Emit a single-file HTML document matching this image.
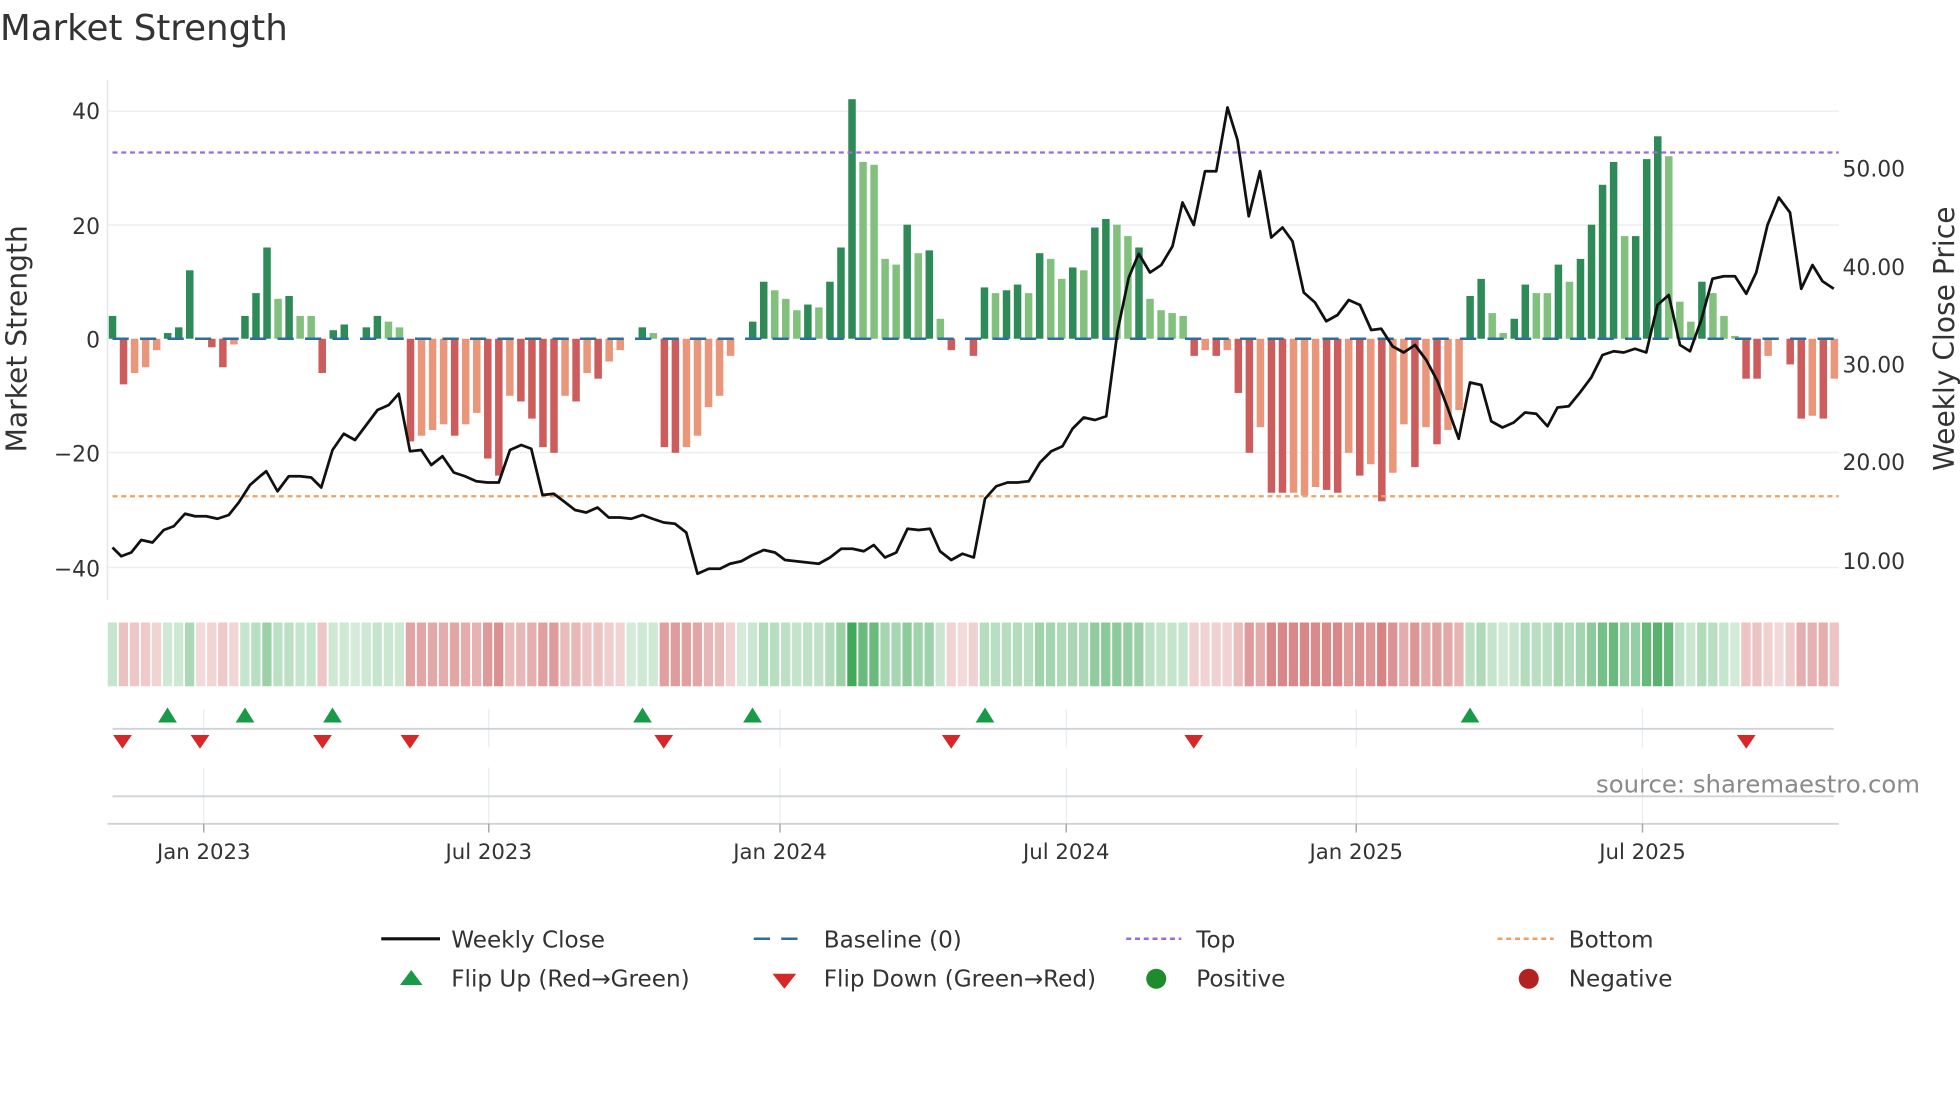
<!DOCTYPE html>
<html><head><meta charset="utf-8"><style>
html,body{margin:0;padding:0;background:#fff;}
svg{display:block;font-family:"DejaVu Sans","Liberation Sans",sans-serif;}
.D{fill:#2e8b57}.L{fill:#82c07e}.R{fill:#cd5c5c}.S{fill:#e9967a}
.g{fill:rgb(60,165,85)}.r{fill:rgb(200,85,85)}
</style></head><body>
<svg width="1960" height="1102" viewBox="0 0 1568 881.6" xmlns="http://www.w3.org/2000/svg">
<rect width="1568" height="882" fill="#fff"/>
<text x="0" y="32" font-size="28.5" fill="#333">Market Strength</text>
<g stroke="#eceff3" stroke-width="1.2">
<line x1="86" x2="1471" y1="89" y2="89"/><line x1="86" x2="1471" y1="180" y2="180"/>
<line x1="86" x2="1471" y1="362" y2="362"/><line x1="86" x2="1471" y1="454" y2="454"/>
</g>
<line x1="86" x2="86" y1="64" y2="480" stroke="#e3e6ea" stroke-width="1.2"/>
<g font-size="17.5" fill="#333" text-anchor="end">
<text x="80" y="95">40</text><text x="80" y="187">20</text><text x="80" y="278">0</text>
<text x="80" y="369">−20</text><text x="80" y="461">−40</text>
</g>
<g font-size="17.5" fill="#333">
<text x="1474" y="141">50.00</text><text x="1474" y="220">40.00</text><text x="1474" y="298">30.00</text>
<text x="1474" y="376">20.00</text><text x="1474" y="455">10.00</text>
</g>
<text transform="translate(21,271) rotate(-90)" font-size="22.5" fill="#333" text-anchor="middle">Market Strength</text>
<text transform="translate(1563,271) rotate(-90)" font-size="22.5" fill="#333" text-anchor="middle">Weekly Close Price</text>

<g transform="translate(87,271) scale(8.83,-4.5625)">
<rect class="D" x="0" y="0" width="0.68" height="4"/>
<rect class="R" x="1" y="-8" width="0.68" height="8"/>
<rect class="S" x="2" y="-6" width="0.68" height="6"/>
<rect class="S" x="3" y="-5" width="0.68" height="5"/>
<rect class="S" x="4" y="-2" width="0.68" height="2"/>
<rect class="D" x="5" y="0" width="0.68" height="1"/>
<rect class="D" x="6" y="0" width="0.68" height="2"/>
<rect class="D" x="7" y="0" width="0.68" height="12"/>
<rect class="R" x="9" y="-1.5" width="0.68" height="1.5"/>
<rect class="R" x="10" y="-5" width="0.68" height="5"/>
<rect class="S" x="11" y="-1" width="0.68" height="1"/>
<rect class="D" x="12" y="0" width="0.68" height="4"/>
<rect class="D" x="13" y="0" width="0.68" height="8"/>
<rect class="D" x="14" y="0" width="0.68" height="16"/>
<rect class="L" x="15" y="0" width="0.68" height="7"/>
<rect class="D" x="16" y="0" width="0.68" height="7.5"/>
<rect class="L" x="17" y="0" width="0.68" height="4"/>
<rect class="L" x="18" y="0" width="0.68" height="4"/>
<rect class="R" x="19" y="-6" width="0.68" height="6"/>
<rect class="D" x="20" y="0" width="0.68" height="1.5"/>
<rect class="D" x="21" y="0" width="0.68" height="2.5"/>
<rect class="D" x="23" y="0" width="0.68" height="2"/>
<rect class="D" x="24" y="0" width="0.68" height="4"/>
<rect class="L" x="25" y="0" width="0.68" height="3"/>
<rect class="L" x="26" y="0" width="0.68" height="2"/>
<rect class="R" x="27" y="-18" width="0.68" height="18"/>
<rect class="S" x="28" y="-17" width="0.68" height="17"/>
<rect class="S" x="29" y="-16" width="0.68" height="16"/>
<rect class="S" x="30" y="-15" width="0.68" height="15"/>
<rect class="R" x="31" y="-17" width="0.68" height="17"/>
<rect class="S" x="32" y="-15" width="0.68" height="15"/>
<rect class="S" x="33" y="-13" width="0.68" height="13"/>
<rect class="R" x="34" y="-21" width="0.68" height="21"/>
<rect class="R" x="35" y="-24" width="0.68" height="24"/>
<rect class="S" x="36" y="-10" width="0.68" height="10"/>
<rect class="R" x="37" y="-11" width="0.68" height="11"/>
<rect class="R" x="38" y="-14" width="0.68" height="14"/>
<rect class="R" x="39" y="-19" width="0.68" height="19"/>
<rect class="R" x="40" y="-20" width="0.68" height="20"/>
<rect class="S" x="41" y="-10" width="0.68" height="10"/>
<rect class="R" x="42" y="-11" width="0.68" height="11"/>
<rect class="S" x="43" y="-6" width="0.68" height="6"/>
<rect class="R" x="44" y="-7" width="0.68" height="7"/>
<rect class="S" x="45" y="-4" width="0.68" height="4"/>
<rect class="S" x="46" y="-2" width="0.68" height="2"/>
<rect class="D" x="48" y="0" width="0.68" height="2"/>
<rect class="L" x="49" y="0" width="0.68" height="1"/>
<rect class="R" x="50" y="-19" width="0.68" height="19"/>
<rect class="R" x="51" y="-20" width="0.68" height="20"/>
<rect class="S" x="52" y="-19" width="0.68" height="19"/>
<rect class="S" x="53" y="-17" width="0.68" height="17"/>
<rect class="S" x="54" y="-12" width="0.68" height="12"/>
<rect class="S" x="55" y="-10" width="0.68" height="10"/>
<rect class="S" x="56" y="-3" width="0.68" height="3"/>
<rect class="D" x="58" y="0" width="0.68" height="3"/>
<rect class="D" x="59" y="0" width="0.68" height="10"/>
<rect class="L" x="60" y="0" width="0.68" height="8.5"/>
<rect class="L" x="61" y="0" width="0.68" height="7"/>
<rect class="L" x="62" y="0" width="0.68" height="5"/>
<rect class="D" x="63" y="0" width="0.68" height="6"/>
<rect class="L" x="64" y="0" width="0.68" height="5.5"/>
<rect class="D" x="65" y="0" width="0.68" height="10"/>
<rect class="D" x="66" y="0" width="0.68" height="16"/>
<rect class="D" x="67" y="0" width="0.68" height="42"/>
<rect class="L" x="68" y="0" width="0.68" height="31"/>
<rect class="L" x="69" y="0" width="0.68" height="30.5"/>
<rect class="L" x="70" y="0" width="0.68" height="14"/>
<rect class="L" x="71" y="0" width="0.68" height="13"/>
<rect class="D" x="72" y="0" width="0.68" height="20"/>
<rect class="L" x="73" y="0" width="0.68" height="15"/>
<rect class="D" x="74" y="0" width="0.68" height="15.5"/>
<rect class="L" x="75" y="0" width="0.68" height="3.5"/>
<rect class="R" x="76" y="-2" width="0.68" height="2"/>
<rect class="R" x="78" y="-3" width="0.68" height="3"/>
<rect class="D" x="79" y="0" width="0.68" height="9"/>
<rect class="L" x="80" y="0" width="0.68" height="8"/>
<rect class="D" x="81" y="0" width="0.68" height="8.5"/>
<rect class="D" x="82" y="0" width="0.68" height="9.5"/>
<rect class="L" x="83" y="0" width="0.68" height="8"/>
<rect class="D" x="84" y="0" width="0.68" height="15"/>
<rect class="L" x="85" y="0" width="0.68" height="14"/>
<rect class="L" x="86" y="0" width="0.68" height="10.5"/>
<rect class="D" x="87" y="0" width="0.68" height="12.5"/>
<rect class="L" x="88" y="0" width="0.68" height="12"/>
<rect class="D" x="89" y="0" width="0.68" height="19.5"/>
<rect class="D" x="90" y="0" width="0.68" height="21"/>
<rect class="L" x="91" y="0" width="0.68" height="20"/>
<rect class="L" x="92" y="0" width="0.68" height="18"/>
<rect class="D" x="93" y="0" width="0.68" height="16"/>
<rect class="L" x="94" y="0" width="0.68" height="7"/>
<rect class="L" x="95" y="0" width="0.68" height="5"/>
<rect class="L" x="96" y="0" width="0.68" height="4.5"/>
<rect class="L" x="97" y="0" width="0.68" height="4"/>
<rect class="R" x="98" y="-3" width="0.68" height="3"/>
<rect class="S" x="99" y="-2" width="0.68" height="2"/>
<rect class="R" x="100" y="-3" width="0.68" height="3"/>
<rect class="S" x="101" y="-2" width="0.68" height="2"/>
<rect class="R" x="102" y="-9.5" width="0.68" height="9.5"/>
<rect class="R" x="103" y="-20" width="0.68" height="20"/>
<rect class="S" x="104" y="-15.5" width="0.68" height="15.5"/>
<rect class="R" x="105" y="-27" width="0.68" height="27"/>
<rect class="R" x="106" y="-27" width="0.68" height="27"/>
<rect class="S" x="107" y="-27" width="0.68" height="27"/>
<rect class="S" x="108" y="-27.5" width="0.68" height="27.5"/>
<rect class="S" x="109" y="-26" width="0.68" height="26"/>
<rect class="R" x="110" y="-26.5" width="0.68" height="26.5"/>
<rect class="R" x="111" y="-27" width="0.68" height="27"/>
<rect class="S" x="112" y="-20" width="0.68" height="20"/>
<rect class="R" x="113" y="-24" width="0.68" height="24"/>
<rect class="S" x="114" y="-22" width="0.68" height="22"/>
<rect class="R" x="115" y="-28.5" width="0.68" height="28.5"/>
<rect class="S" x="116" y="-23.5" width="0.68" height="23.5"/>
<rect class="S" x="117" y="-15" width="0.68" height="15"/>
<rect class="R" x="118" y="-22.5" width="0.68" height="22.5"/>
<rect class="S" x="119" y="-15.5" width="0.68" height="15.5"/>
<rect class="R" x="120" y="-18.5" width="0.68" height="18.5"/>
<rect class="S" x="121" y="-16" width="0.68" height="16"/>
<rect class="S" x="122" y="-12.5" width="0.68" height="12.5"/>
<rect class="D" x="123" y="0" width="0.68" height="7.5"/>
<rect class="D" x="124" y="0" width="0.68" height="10.5"/>
<rect class="L" x="125" y="0" width="0.68" height="4.5"/>
<rect class="L" x="126" y="0" width="0.68" height="1"/>
<rect class="D" x="127" y="0" width="0.68" height="3.5"/>
<rect class="D" x="128" y="0" width="0.68" height="9.5"/>
<rect class="L" x="129" y="0" width="0.68" height="8"/>
<rect class="L" x="130" y="0" width="0.68" height="8"/>
<rect class="D" x="131" y="0" width="0.68" height="13"/>
<rect class="L" x="132" y="0" width="0.68" height="10"/>
<rect class="D" x="133" y="0" width="0.68" height="14"/>
<rect class="D" x="134" y="0" width="0.68" height="20"/>
<rect class="D" x="135" y="0" width="0.68" height="27"/>
<rect class="D" x="136" y="0" width="0.68" height="31"/>
<rect class="L" x="137" y="0" width="0.68" height="18"/>
<rect class="D" x="138" y="0" width="0.68" height="18"/>
<rect class="D" x="139" y="0" width="0.68" height="31.5"/>
<rect class="D" x="140" y="0" width="0.68" height="35.5"/>
<rect class="L" x="141" y="0" width="0.68" height="32"/>
<rect class="L" x="142" y="0" width="0.68" height="6.5"/>
<rect class="L" x="143" y="0" width="0.68" height="3"/>
<rect class="D" x="144" y="0" width="0.68" height="10"/>
<rect class="L" x="145" y="0" width="0.68" height="8"/>
<rect class="L" x="146" y="0" width="0.68" height="4"/>
<rect class="L" x="147" y="0" width="0.68" height="0.5"/>
<rect class="R" x="148" y="-7" width="0.68" height="7"/>
<rect class="R" x="149" y="-7" width="0.68" height="7"/>
<rect class="S" x="150" y="-3" width="0.68" height="3"/>
<rect class="R" x="152" y="-4.5" width="0.68" height="4.5"/>
<rect class="R" x="153" y="-14" width="0.68" height="14"/>
<rect class="S" x="154" y="-13.5" width="0.68" height="13.5"/>
<rect class="R" x="155" y="-14" width="0.68" height="14"/>
<rect class="S" x="156" y="-7" width="0.68" height="7"/>
</g>

<line x1="90" x2="1467" y1="271" y2="271" stroke="#2e6e9e" stroke-width="2" stroke-dasharray="13,9"/>
<line x1="90" x2="1471" y1="122" y2="122" stroke="#9b6be0" stroke-width="1.8" stroke-dasharray="4,3"/>
<line x1="90" x2="1471" y1="397" y2="397" stroke="#f0a060" stroke-width="1.8" stroke-dasharray="4,3"/>
<polyline fill="none" stroke="#111" stroke-width="2.2" stroke-linejoin="round" points="90,438 97,445 105,442 113,432 122,434 131,424 139,421 148,411 156,413 165,413 174,415 183,412 191,402 200,388 208,381 213,377 222,393 231,381 240,381 249,382 257,390 266,360 275,347 284,352 293,340 302,328 311,324 319,315 328,361 337,360 345,372 354,365 363,378 372,381 381,385 390,386 399,386 408,360 417,356 425,359 434,396 443,395 451,401 460,408 469,410 478,406 487,414 496,414 505,415 514,412 522,415 531,418 540,419 549,426 558,459 567,455 576,455 584,451 593,449 602,444 611,440 620,442 628,448 637,449 646,450 655,451 664,446 673,439 682,439 691,441 699,436 708,446 717,442 726,423 735,424 744,423 752,441 761,448 770,443 779,446 788,399 797,389 806,386 814,386 823,385 832,370 841,361 850,357 858,343 867,334 876,336 885,333 894,265 903,222 911,203 920,218 929,212 938,197 946,162 955,180 964,137 973,137 982,86 990,112 999,173 1008,137 1017,190 1026,182 1034,193 1043,234 1052,242 1061,257 1070,252 1079,240 1088,244 1097,264 1105,263 1114,277 1123,282 1132,276 1141,288 1150,305 1158,326 1167,351 1176,306 1185,308 1193,337 1202,342 1211,338 1220,330 1229,331 1238,341 1246,326 1255,325 1264,314 1273,302 1282,284 1291,281 1299,282 1308,279 1317,282 1326,244 1335,236 1344,276 1352,281 1361,256 1370,223 1379,221 1388,221 1397,235 1405,218 1414,180 1423,158 1432,170 1441,231 1450,212 1458,225 1467,231"/>

<g transform="translate(86.2,498) scale(8.83,1)">
<rect class="g" x="0" width="0.84" height="51" fill-opacity=".29"/>
<rect class="r" x="1" width="0.84" height="51" fill-opacity=".36"/>
<rect class="r" x="2" width="0.84" height="51" fill-opacity=".33"/>
<rect class="r" x="3" width="0.84" height="51" fill-opacity=".31"/>
<rect class="r" x="4" width="0.84" height="51" fill-opacity=".26"/>
<rect class="g" x="5" width="0.84" height="51" fill-opacity=".24"/>
<rect class="g" x="6" width="0.84" height="51" fill-opacity=".26"/>
<rect class="g" x="7" width="0.84" height="51" fill-opacity=".43"/>
<rect class="r" x="8" width="0.84" height="51" fill-opacity=".22"/>
<rect class="r" x="9" width="0.84" height="51" fill-opacity=".25"/>
<rect class="r" x="10" width="0.84" height="51" fill-opacity=".31"/>
<rect class="r" x="11" width="0.84" height="51" fill-opacity=".24"/>
<rect class="g" x="12" width="0.84" height="51" fill-opacity=".29"/>
<rect class="g" x="13" width="0.84" height="51" fill-opacity=".36"/>
<rect class="g" x="14" width="0.84" height="51" fill-opacity=".51"/>
<rect class="g" x="15" width="0.84" height="51" fill-opacity=".35"/>
<rect class="g" x="16" width="0.84" height="51" fill-opacity=".35"/>
<rect class="g" x="17" width="0.84" height="51" fill-opacity=".29"/>
<rect class="g" x="18" width="0.84" height="51" fill-opacity=".29"/>
<rect class="r" x="19" width="0.84" height="51" fill-opacity=".33"/>
<rect class="g" x="20" width="0.84" height="51" fill-opacity=".25"/>
<rect class="g" x="21" width="0.84" height="51" fill-opacity=".26"/>
<rect class="g" x="22" width="0.84" height="51" fill-opacity=".22"/>
<rect class="g" x="23" width="0.84" height="51" fill-opacity=".26"/>
<rect class="g" x="24" width="0.84" height="51" fill-opacity=".29"/>
<rect class="g" x="25" width="0.84" height="51" fill-opacity=".27"/>
<rect class="g" x="26" width="0.84" height="51" fill-opacity=".26"/>
<rect class="r" x="27" width="0.84" height="51" fill-opacity=".54"/>
<rect class="r" x="28" width="0.84" height="51" fill-opacity=".52"/>
<rect class="r" x="29" width="0.84" height="51" fill-opacity=".51"/>
<rect class="r" x="30" width="0.84" height="51" fill-opacity=".49"/>
<rect class="r" x="31" width="0.84" height="51" fill-opacity=".52"/>
<rect class="r" x="32" width="0.84" height="51" fill-opacity=".49"/>
<rect class="r" x="33" width="0.84" height="51" fill-opacity=".45"/>
<rect class="r" x="34" width="0.84" height="51" fill-opacity=".60"/>
<rect class="r" x="35" width="0.84" height="51" fill-opacity=".65"/>
<rect class="r" x="36" width="0.84" height="51" fill-opacity=".40"/>
<rect class="r" x="37" width="0.84" height="51" fill-opacity=".42"/>
<rect class="r" x="38" width="0.84" height="51" fill-opacity=".47"/>
<rect class="r" x="39" width="0.84" height="51" fill-opacity=".56"/>
<rect class="r" x="40" width="0.84" height="51" fill-opacity=".58"/>
<rect class="r" x="41" width="0.84" height="51" fill-opacity=".40"/>
<rect class="r" x="42" width="0.84" height="51" fill-opacity=".42"/>
<rect class="r" x="43" width="0.84" height="51" fill-opacity=".33"/>
<rect class="r" x="44" width="0.84" height="51" fill-opacity=".35"/>
<rect class="r" x="45" width="0.84" height="51" fill-opacity=".29"/>
<rect class="r" x="46" width="0.84" height="51" fill-opacity=".26"/>
<rect class="g" x="47" width="0.84" height="51" fill-opacity=".22"/>
<rect class="g" x="48" width="0.84" height="51" fill-opacity=".26"/>
<rect class="g" x="49" width="0.84" height="51" fill-opacity=".24"/>
<rect class="r" x="50" width="0.84" height="51" fill-opacity=".56"/>
<rect class="r" x="51" width="0.84" height="51" fill-opacity=".58"/>
<rect class="r" x="52" width="0.84" height="51" fill-opacity=".56"/>
<rect class="r" x="53" width="0.84" height="51" fill-opacity=".52"/>
<rect class="r" x="54" width="0.84" height="51" fill-opacity=".43"/>
<rect class="r" x="55" width="0.84" height="51" fill-opacity=".40"/>
<rect class="r" x="56" width="0.84" height="51" fill-opacity=".27"/>
<rect class="g" x="57" width="0.84" height="51" fill-opacity=".22"/>
<rect class="g" x="58" width="0.84" height="51" fill-opacity=".27"/>
<rect class="g" x="59" width="0.84" height="51" fill-opacity=".40"/>
<rect class="g" x="60" width="0.84" height="51" fill-opacity=".37"/>
<rect class="g" x="61" width="0.84" height="51" fill-opacity=".35"/>
<rect class="g" x="62" width="0.84" height="51" fill-opacity=".31"/>
<rect class="g" x="63" width="0.84" height="51" fill-opacity=".33"/>
<rect class="g" x="64" width="0.84" height="51" fill-opacity=".32"/>
<rect class="g" x="65" width="0.84" height="51" fill-opacity=".40"/>
<rect class="g" x="66" width="0.84" height="51" fill-opacity=".51"/>
<rect class="g" x="67" width="0.84" height="51" fill-opacity=".97"/>
<rect class="g" x="68" width="0.84" height="51" fill-opacity=".77"/>
<rect class="g" x="69" width="0.84" height="51" fill-opacity=".77"/>
<rect class="g" x="70" width="0.84" height="51" fill-opacity=".47"/>
<rect class="g" x="71" width="0.84" height="51" fill-opacity=".45"/>
<rect class="g" x="72" width="0.84" height="51" fill-opacity=".58"/>
<rect class="g" x="73" width="0.84" height="51" fill-opacity=".49"/>
<rect class="g" x="74" width="0.84" height="51" fill-opacity=".50"/>
<rect class="g" x="75" width="0.84" height="51" fill-opacity=".28"/>
<rect class="r" x="76" width="0.84" height="51" fill-opacity=".26"/>
<rect class="r" x="77" width="0.84" height="51" fill-opacity=".22"/>
<rect class="r" x="78" width="0.84" height="51" fill-opacity=".27"/>
<rect class="g" x="79" width="0.84" height="51" fill-opacity=".38"/>
<rect class="g" x="80" width="0.84" height="51" fill-opacity=".36"/>
<rect class="g" x="81" width="0.84" height="51" fill-opacity=".37"/>
<rect class="g" x="82" width="0.84" height="51" fill-opacity=".39"/>
<rect class="g" x="83" width="0.84" height="51" fill-opacity=".36"/>
<rect class="g" x="84" width="0.84" height="51" fill-opacity=".49"/>
<rect class="g" x="85" width="0.84" height="51" fill-opacity=".47"/>
<rect class="g" x="86" width="0.84" height="51" fill-opacity=".41"/>
<rect class="g" x="87" width="0.84" height="51" fill-opacity=".44"/>
<rect class="g" x="88" width="0.84" height="51" fill-opacity=".43"/>
<rect class="g" x="89" width="0.84" height="51" fill-opacity=".57"/>
<rect class="g" x="90" width="0.84" height="51" fill-opacity=".60"/>
<rect class="g" x="91" width="0.84" height="51" fill-opacity=".58"/>
<rect class="g" x="92" width="0.84" height="51" fill-opacity=".54"/>
<rect class="g" x="93" width="0.84" height="51" fill-opacity=".51"/>
<rect class="g" x="94" width="0.84" height="51" fill-opacity=".35"/>
<rect class="g" x="95" width="0.84" height="51" fill-opacity=".31"/>
<rect class="g" x="96" width="0.84" height="51" fill-opacity=".30"/>
<rect class="g" x="97" width="0.84" height="51" fill-opacity=".29"/>
<rect class="r" x="98" width="0.84" height="51" fill-opacity=".27"/>
<rect class="r" x="99" width="0.84" height="51" fill-opacity=".26"/>
<rect class="r" x="100" width="0.84" height="51" fill-opacity=".27"/>
<rect class="r" x="101" width="0.84" height="51" fill-opacity=".26"/>
<rect class="r" x="102" width="0.84" height="51" fill-opacity=".39"/>
<rect class="r" x="103" width="0.84" height="51" fill-opacity=".58"/>
<rect class="r" x="104" width="0.84" height="51" fill-opacity=".50"/>
<rect class="r" x="105" width="0.84" height="51" fill-opacity=".70"/>
<rect class="r" x="106" width="0.84" height="51" fill-opacity=".70"/>
<rect class="r" x="107" width="0.84" height="51" fill-opacity=".70"/>
<rect class="r" x="108" width="0.84" height="51" fill-opacity=".71"/>
<rect class="r" x="109" width="0.84" height="51" fill-opacity=".69"/>
<rect class="r" x="110" width="0.84" height="51" fill-opacity=".69"/>
<rect class="r" x="111" width="0.84" height="51" fill-opacity=".70"/>
<rect class="r" x="112" width="0.84" height="51" fill-opacity=".58"/>
<rect class="r" x="113" width="0.84" height="51" fill-opacity=".65"/>
<rect class="r" x="114" width="0.84" height="51" fill-opacity=".61"/>
<rect class="r" x="115" width="0.84" height="51" fill-opacity=".73"/>
<rect class="r" x="116" width="0.84" height="51" fill-opacity=".64"/>
<rect class="r" x="117" width="0.84" height="51" fill-opacity=".49"/>
<rect class="r" x="118" width="0.84" height="51" fill-opacity=".62"/>
<rect class="r" x="119" width="0.84" height="51" fill-opacity=".50"/>
<rect class="r" x="120" width="0.84" height="51" fill-opacity=".55"/>
<rect class="r" x="121" width="0.84" height="51" fill-opacity=".51"/>
<rect class="r" x="122" width="0.84" height="51" fill-opacity=".44"/>
<rect class="g" x="123" width="0.84" height="51" fill-opacity=".35"/>
<rect class="g" x="124" width="0.84" height="51" fill-opacity=".41"/>
<rect class="g" x="125" width="0.84" height="51" fill-opacity=".30"/>
<rect class="g" x="126" width="0.84" height="51" fill-opacity=".24"/>
<rect class="g" x="127" width="0.84" height="51" fill-opacity=".28"/>
<rect class="g" x="128" width="0.84" height="51" fill-opacity=".39"/>
<rect class="g" x="129" width="0.84" height="51" fill-opacity=".36"/>
<rect class="g" x="130" width="0.84" height="51" fill-opacity=".36"/>
<rect class="g" x="131" width="0.84" height="51" fill-opacity=".45"/>
<rect class="g" x="132" width="0.84" height="51" fill-opacity=".40"/>
<rect class="g" x="133" width="0.84" height="51" fill-opacity=".47"/>
<rect class="g" x="134" width="0.84" height="51" fill-opacity=".58"/>
<rect class="g" x="135" width="0.84" height="51" fill-opacity=".70"/>
<rect class="g" x="136" width="0.84" height="51" fill-opacity=".77"/>
<rect class="g" x="137" width="0.84" height="51" fill-opacity=".54"/>
<rect class="g" x="138" width="0.84" height="51" fill-opacity=".54"/>
<rect class="g" x="139" width="0.84" height="51" fill-opacity=".78"/>
<rect class="g" x="140" width="0.84" height="51" fill-opacity=".86"/>
<rect class="g" x="141" width="0.84" height="51" fill-opacity=".79"/>
<rect class="g" x="142" width="0.84" height="51" fill-opacity=".34"/>
<rect class="g" x="143" width="0.84" height="51" fill-opacity=".27"/>
<rect class="g" x="144" width="0.84" height="51" fill-opacity=".40"/>
<rect class="g" x="145" width="0.84" height="51" fill-opacity=".36"/>
<rect class="g" x="146" width="0.84" height="51" fill-opacity=".29"/>
<rect class="g" x="147" width="0.84" height="51" fill-opacity=".23"/>
<rect class="r" x="148" width="0.84" height="51" fill-opacity=".35"/>
<rect class="r" x="149" width="0.84" height="51" fill-opacity=".35"/>
<rect class="r" x="150" width="0.84" height="51" fill-opacity=".27"/>
<rect class="r" x="151" width="0.84" height="51" fill-opacity=".22"/>
<rect class="r" x="152" width="0.84" height="51" fill-opacity=".30"/>
<rect class="r" x="153" width="0.84" height="51" fill-opacity=".47"/>
<rect class="r" x="154" width="0.84" height="51" fill-opacity=".46"/>
<rect class="r" x="155" width="0.84" height="51" fill-opacity=".47"/>
<rect class="r" x="156" width="0.84" height="51" fill-opacity=".35"/>
</g>

<g stroke="#e8ecf0" stroke-width="1">
<line x1="163" x2="163" y1="567" y2="598"/><line x1="391" x2="391" y1="567" y2="598"/>
<line x1="624" x2="624" y1="567" y2="598"/><line x1="853" x2="853" y1="567" y2="598"/>
<line x1="1085" x2="1085" y1="567" y2="598"/><line x1="1314" x2="1314" y1="567" y2="598"/>
<line x1="163" x2="163" y1="614" y2="659"/><line x1="391" x2="391" y1="614" y2="659"/>
<line x1="624" x2="624" y1="614" y2="659"/><line x1="853" x2="853" y1="614" y2="659"/>
<line x1="1085" x2="1085" y1="614" y2="659"/><line x1="1314" x2="1314" y1="614" y2="659"/>
</g>
<line x1="90" x2="1467" y1="583" y2="583" stroke="#cfd2d6" stroke-width="1.5"/>
<line x1="90" x2="1467" y1="637" y2="637" stroke="#cfd2d6" stroke-width="1.5"/>
<line x1="86" x2="1471" y1="659" y2="659" stroke="#cfd2d6" stroke-width="1.5"/>
<g stroke="#aaa" stroke-width="1.2">
<line x1="163" x2="163" y1="659" y2="666"/><line x1="391" x2="391" y1="659" y2="666"/>
<line x1="624" x2="624" y1="659" y2="666"/><line x1="853" x2="853" y1="659" y2="666"/>
<line x1="1085" x2="1085" y1="659" y2="666"/><line x1="1314" x2="1314" y1="659" y2="666"/>
</g>
<g fill="#1a9a48">
<polygon points="126.5,578 134,566 141.5,578"/><polygon points="188.5,578 196,566 203.5,578"/>
<polygon points="258.5,578 266,566 273.5,578"/><polygon points="506.5,578 514,566 521.5,578"/>
<polygon points="594.5,578 602,566 609.5,578"/><polygon points="780.5,578 788,566 795.5,578"/>
<polygon points="1168.5,578 1176,566 1183.5,578"/>
</g>
<g fill="#d62828">
<polygon points="90.5,588 105.5,588 98,599"/><polygon points="152.5,588 167.5,588 160,599"/>
<polygon points="250.5,588 265.5,588 258,599"/><polygon points="320.5,588 335.5,588 328,599"/>
<polygon points="523.5,588 538.5,588 531,599"/><polygon points="753.5,588 768.5,588 761,599"/>
<polygon points="947.5,588 962.5,588 955,599"/><polygon points="1389.5,588 1404.5,588 1397,599"/>
</g>
<g font-size="17" fill="#333" text-anchor="middle">
<text x="163" y="687">Jan 2023</text><text x="391" y="687">Jul 2023</text><text x="624" y="687">Jan 2024</text>
<text x="853" y="687">Jul 2024</text><text x="1085" y="687">Jan 2025</text><text x="1314" y="687">Jul 2025</text>
</g>
<text x="1536" y="634" font-size="19.5" fill="#8a8a8a" text-anchor="end">source: sharemaestro.com</text>
<g font-size="18.5" fill="#333">
<line x1="305" x2="352" y1="751" y2="751" stroke="#111" stroke-width="2.5"/>
<text x="361" y="758">Weekly Close</text>
<line x1="603" x2="647" y1="751" y2="751" stroke="#2e6e9e" stroke-width="2" stroke-dasharray="13,9"/>
<text x="659" y="758">Baseline (0)</text>
<line x1="901" x2="945" y1="751" y2="751" stroke="#9b6be0" stroke-width="2" stroke-dasharray="4,3"/>
<text x="957" y="758">Top</text>
<line x1="1198" x2="1243" y1="751" y2="751" stroke="#f0a060" stroke-width="2" stroke-dasharray="4,3"/>
<text x="1255" y="758">Bottom</text>
<polygon points="320,788 329,776 338,788" fill="#1a9a48"/>
<text x="361" y="789">Flip Up (Red→Green)</text>
<polygon points="618,779 637,779 627.5,791" fill="#d62828"/>
<text x="659" y="789">Flip Down (Green→Red)</text>
<circle cx="925" cy="783" r="8" fill="#1e8c2a"/>
<text x="957" y="789">Positive</text>
<circle cx="1223" cy="783" r="8" fill="#b22222"/>
<text x="1255" y="789">Negative</text>
</g>
</svg>
</body></html>
